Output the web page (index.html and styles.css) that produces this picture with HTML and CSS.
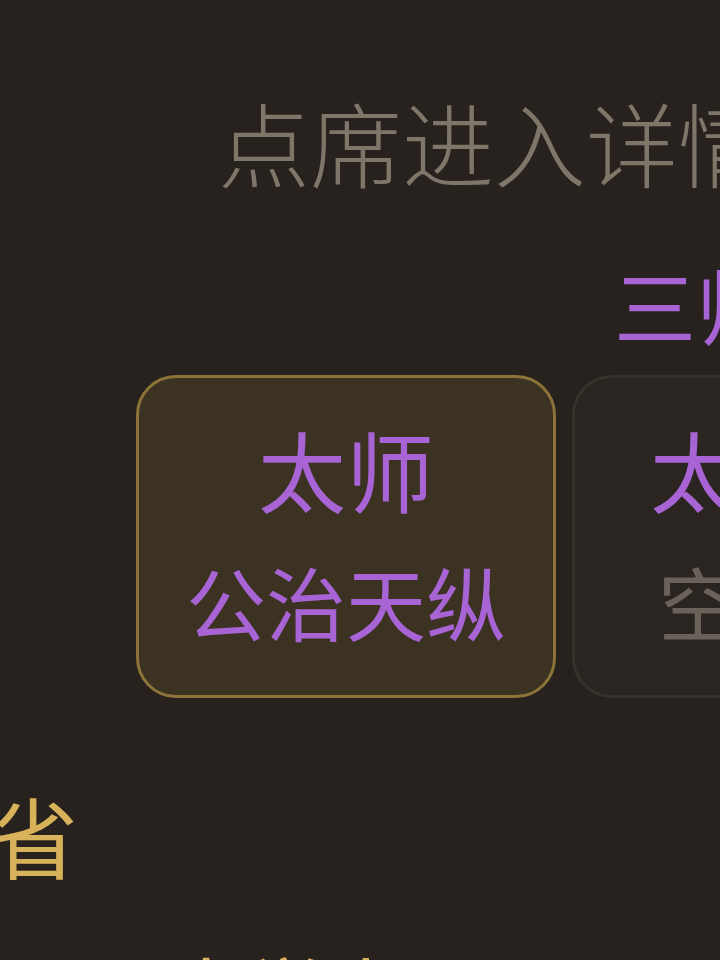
FILE: index.html
```html
<!DOCTYPE html>
<html lang="zh-CN">
<head>
<meta charset="utf-8">
<link rel="stylesheet" href="styles.css">
</head>
<body>
<div class="page">
  <div class="hint">点席进入详情</div>
  <div class="group-title">三师</div>
  <div class="cards">
    <div class="card active">
      <div class="role">太师</div>
      <div class="holder">公治天纵</div>
    </div>
    <div class="card">
      <div class="role">太傅</div>
      <div class="holder empty">空缺</div>
    </div>
  </div>
  <div class="province">省</div>
  <div class="next">大学士</div>
</div>
</body>
</html>
```
FILE: styles.css
```css
html, body {
  margin: 0;
  padding: 0;
  background: #28221e;
}
.page {
  width: 720px;
  height: 960px;
  overflow: hidden;
  font-family: "Noto Sans CJK SC", "Noto Sans", sans-serif;
  white-space: nowrap;
  display: flex;
  flex-direction: column;
}
.hint {
  margin-top: 95px;
  padding-left: 218px;
  font-size: 92px;
  line-height: 1;
  color: #7f766a;
  font-weight: 300;
}
.group-title {
  margin-top: 76px;
  padding-left: 614px;
  font-size: 82px;
  line-height: 1;
  color: #a864d4;
}
.cards {
  margin-top: 30px;
  padding-left: 136px;
  display: flex;
  gap: 16px;
}
.card {
  flex: none;
  box-sizing: border-box;
  height: 323px;
  min-width: 332px;
  padding: 0 48px 10px;
  border-radius: 40px;
  border: 3px solid #37312b;
  background: #2b2521;
  display: flex;
  flex-direction: column;
  align-items: center;
  justify-content: center;
  gap: 48px;
}
.card.active {
  width: 420px;
  background: #3b3222;
  border-color: #8c7338;
}
.role {
  font-size: 88px;
  line-height: 1;
  color: #a864d4;
}
.holder {
  font-size: 80px;
  line-height: 1;
  color: #a864d4;
}
.holder.empty {
  color: #6a6259;
}
.province {
  margin-top: 92px;
  margin-left: -10px;
  font-size: 88px;
  line-height: 1;
  color: #d8b25a;
}
.next {
  margin-top: 72px;
  padding-left: 166px;
  font-size: 80px;
  line-height: 1;
  color: #d8b25a;
}
```
